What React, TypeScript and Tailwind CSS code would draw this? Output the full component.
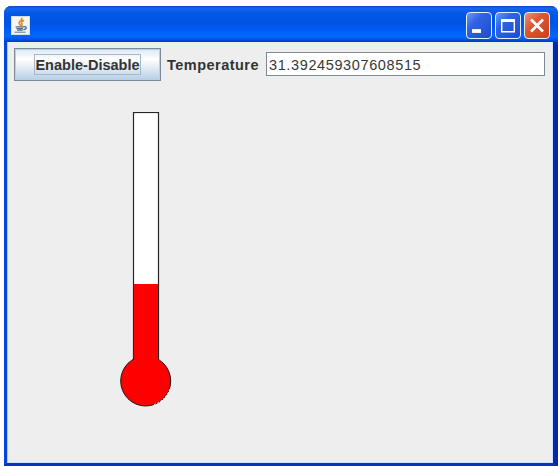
import React, { useState } from "react";

function JavaIcon() {
  return (
    <svg width="19" height="19" viewBox="0 0 19 19" className="block">
      <rect x="0.5" y="0.5" width="18" height="18" fill="#f5f5f2" stroke="#d5deed" />
      <path d="M10.8 1.8C11.8 4.6 7.2 5.2 8.2 7.4L9.6 9.8M13 4.4C10 5.6 10 6.8 11 8.2C11.3 9 10.6 9.6 10.2 10" fill="none" stroke="#e58a32" strokeWidth="1.7" />
      <path d="M4.6 10.9H12.8M5.4 12.7H12M6.2 14.2H11.7M12.8 10.7C16.4 9.8 16 13.2 12.4 13.6" fill="none" stroke="#4c6c89" strokeWidth="1.3" />
      <path d="M3.5 16.2H14.7" fill="none" stroke="#66839f" strokeWidth="1.1" />
    </svg>
  );
}

function Thermometer() {
  return (
    <svg width="52" height="296" viewBox="0 0 52 296" className="block">
      <rect x="13.5" y="0.5" width="25" height="252" fill="#ffffff" stroke="#262626" strokeWidth="1.2" />
      <circle cx="25.7" cy="269" r="25" fill="#ff0000" stroke="#241010" />
      <path d="M49.8 277A25 25 0 0 1 34 292.6" fill="none" stroke="#eeeeee" strokeWidth="1" strokeDasharray="2 1.5" />
      <rect x="14" y="172" width="24" height="84" fill="#ff0000" />
    </svg>
  );
}

const captionButton =
  "flex h-[27px] w-[26px] items-center justify-center rounded-[4px] border border-[#e6efff]";

export default function App() {
  const [temperature, setTemperature] = useState("31.392459307608515");
  const [enabled, setEnabled] = useState(true);

  return (
    <main className="h-[466px] w-[558px] overflow-hidden bg-white pl-1 pt-1.5 font-['Liberation_Sans',Arial,sans-serif]">
      <section className="flex h-[460px] w-[554px] flex-col rounded-t-[7px] border-b-[3px] border-l-[3px] border-r-[5px] border-b-[#0832c0] border-l-[#0643dc] border-r-[#0427ac] bg-[#0643dc]">
        <header className="-ml-[3px] -mr-[5px] flex h-9 shrink-0 items-center justify-between rounded-t-[7px] bg-[linear-gradient(to_bottom,#0a4ad0_0%,#1464ee_7%,#0058e6_20%,#0054e3_48%,#005cf5_65%,#0068ff_83%,#005cef_91%,#0038c2_100%)] pl-[7px] pr-[8px]">
          <div className="mt-[3px]">
            <JavaIcon />
          </div>
          <div className="mt-[2px] flex gap-[3px]">
            <button aria-label="Minimize" className={`${captionButton} bg-[linear-gradient(135deg,#6f96f5_0%,#2f63e4_35%,#1e4bd0_100%)]`}>
              <svg width="24" height="25" viewBox="0 0 24 25"><path d="M5 18H14" stroke="white" strokeWidth="3.8" /></svg>
            </button>
            <button aria-label="Maximize" className={`${captionButton} bg-[linear-gradient(135deg,#6f96f5_0%,#2f63e4_35%,#1e4bd0_100%)]`}>
              <svg width="24" height="25" viewBox="0 0 24 25"><path d="M5.7 7V18.7H18.3V7" fill="none" stroke="white" strokeWidth="1.4" /><path d="M5 7.5H19" stroke="white" strokeWidth="3" /></svg>
            </button>
            <button aria-label="Close" className={`${captionButton} bg-[linear-gradient(135deg,#ee9377_0%,#df5735_38%,#c93f18_100%)]`}>
              <svg width="24" height="25" viewBox="0 0 24 25"><path d="M6 6.5L18 18.5M18 6.5L6 18.5" stroke="white" strokeWidth="2.7" /></svg>
            </button>
          </div>
        </header>
        <div className="min-h-0 flex-1 border-b border-l border-r border-b-[#c9e5ff] border-l-[#a9c9f5] border-r-[#c9e5ff] bg-[#eeeeee]">
          <div className="flex items-center pl-1.5 pt-1.5">
            <button
              onClick={() => setEnabled(!enabled)}
              className="flex h-[33px] w-[147px] items-center justify-center border border-[#7a8a99] bg-[linear-gradient(to_bottom,#dce7f2_0%,#ffffff_33%,#edf2f7_50%,#b8cfe5_100%)] shadow-[inset_0_0_0_1px_#b8cfe5]"
            >
              <span className="flex h-[21px] w-[107px] items-center justify-center whitespace-nowrap border border-[#a3b8cc] pt-[2px] text-[14.5px] font-bold tracking-[0.02px] text-[#333333]">
                Enable-Disable
              </span>
            </button>
            <label htmlFor="temperature" className="ml-[6px] w-[99px] whitespace-nowrap pt-[2px] text-[14.5px] font-bold tracking-[0.48px] text-[#333333]">
              Temperature
            </label>
            <input
              id="temperature"
              value={temperature}
              disabled={!enabled}
              onChange={(event) => setTemperature(event.target.value)}
              className="mb-px h-6 w-[279px] border border-[#7a8a99] bg-white pl-[2px] pt-px text-[14.5px] tracking-[0.62px] text-[#383838] outline-none"
            />
          </div>
          <div className="ml-[112px] mt-[31px] w-[52px]">
            <Thermometer />
          </div>
        </div>
      </section>
    </main>
  );
}
